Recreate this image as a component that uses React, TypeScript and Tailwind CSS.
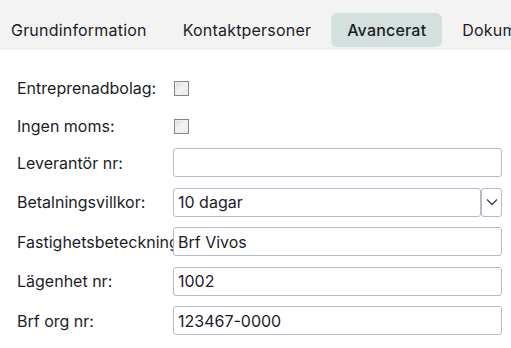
import React from 'react';

const tabs = ['Grundinformation', 'Kontaktpersoner', 'Avancerat', 'Dokument'];

function Checkbox() {
  return (
    <div className="w-[15px] h-[15px] border border-[#858585] bg-gradient-to-br from-[#d8d8d8] via-[#f2f3f6] to-[#e4e8f0] shadow-[inset_0_0_0_1px_#eeeeee]" />
  );
}

function TextBox({ value = '' }: { value?: string }) {
  return (
    <div className="flex-1 h-[29px] border border-[#b6b9c9] rounded-[3px] bg-white flex items-center px-[4px] text-[16px] text-[#1c1c28] whitespace-nowrap overflow-hidden">
      {value}
    </div>
  );
}

function Row({ label, children }: { label: string; children: React.ReactNode }) {
  return (
    <div className="flex items-center">
      <div className="w-[156px] shrink-0 overflow-hidden whitespace-nowrap text-[16px] text-[#1c1c28]">{label}</div>
      {children}
    </div>
  );
}

export default function App() {
  return (
    <div className="w-[511px] h-[348px] bg-white overflow-hidden" style={{ fontFamily: 'Inter, "Noto Sans", sans-serif' }}>
      <div className="h-[50px] bg-[#f3f3f3] flex items-end pb-[3px] overflow-hidden">
        <div className="flex gap-[4px] ml-[-5px] whitespace-nowrap">
          {tabs.map((t) => (
            <div
              key={t}
              className={`h-[34px] px-[16px] flex items-center rounded-[6px] text-[16px] tracking-[0.2px] text-[#1c1c28] ${
                t === 'Avancerat' ? 'bg-[#d3e0dd] font-medium' : ''
              }`}
            >
              {t}
            </div>
          ))}
        </div>
      </div>

      <div className="pl-[17px] pr-[9px] pt-[23px] flex flex-col">
        <div className="h-[30px] flex items-center">
          <Row label="Entreprenadbolag:">
            <div className="pl-[1px]"><Checkbox /></div>
          </Row>
        </div>
        <div className="h-[30px] mt-[8px] flex items-center">
          <Row label="Ingen moms:">
            <div className="pl-[1px]"><Checkbox /></div>
          </Row>
        </div>

        <div className="mt-[7px] flex flex-col gap-[10.5px]">
          <Row label="Leverantör nr:">
            <TextBox />
          </Row>
          <Row label="Betalningsvillkor:">
            <div className="flex-1 flex">
              <TextBox value="10 dagar" />
              <div className="w-[21px] h-[29px] border border-[#b6b9c9] rounded-[3px] flex items-center justify-center">
                <svg width="12" height="8" viewBox="0 0 12 8" fill="none">
                  <path d="M1 1.5 L6 6.5 L11 1.5" stroke="#3a3f55" strokeWidth="1.3" />
                </svg>
              </div>
            </div>
          </Row>
          <Row label="Fastighetsbeteckning:">
            <TextBox value="Brf Vivos" />
          </Row>
          <Row label="Lägenhet nr:">
            <TextBox value="1002" />
          </Row>
          <Row label="Brf org nr:">
            <TextBox value="123467-0000" />
          </Row>
        </div>
      </div>
    </div>
  );
}
